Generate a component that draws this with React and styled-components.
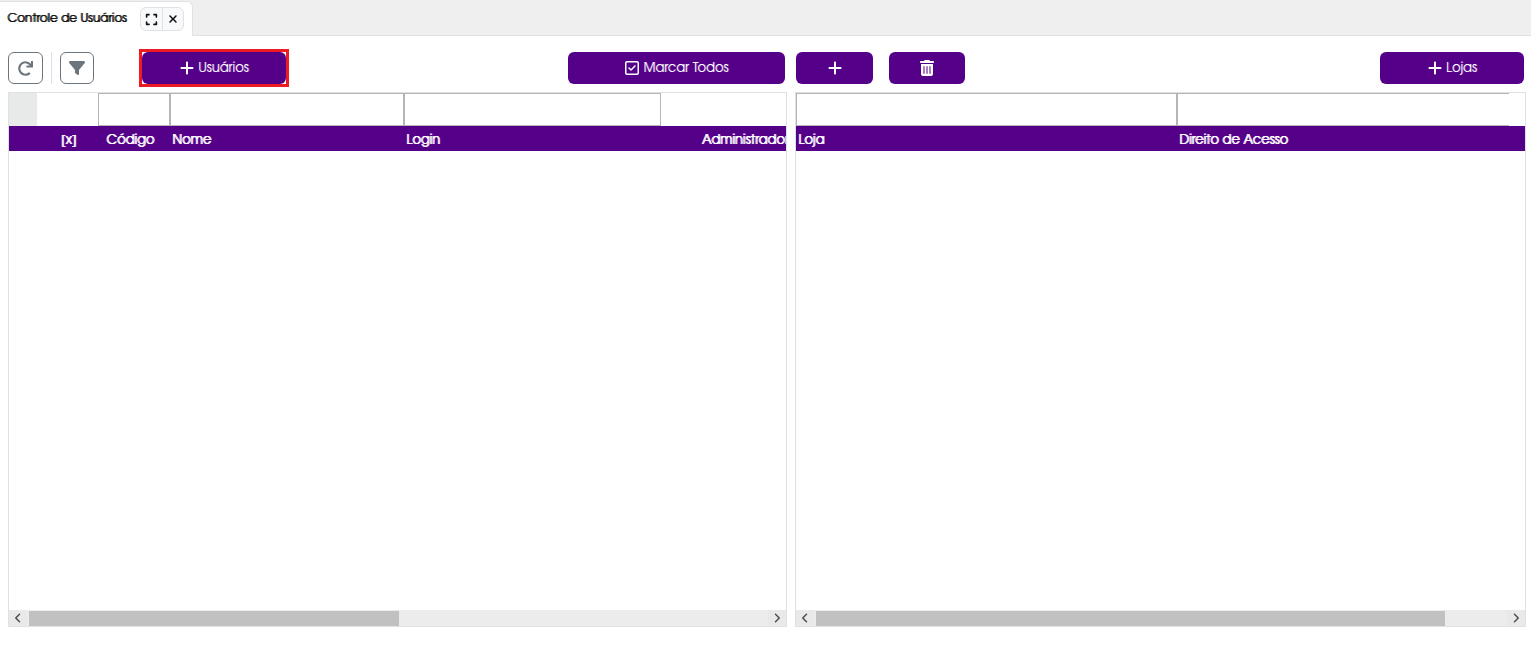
import React, { useRef } from "react";
import styled, { createGlobalStyle } from "styled-components";
import {
  FaExpand,
  FaFilter,
  FaPlus,
  FaRegSquareCheck,
  FaTrashCan,
  FaXmark,
  FaAngleLeft,
  FaAngleRight,
} from "react-icons/fa6";
import { FaRedo } from "react-icons/fa";

const PURPLE = "#550088";
const LINE = "#dee2e6";

const GlobalStyle = createGlobalStyle`
  * { box-sizing: border-box; }
  body {
    margin: 0;
    background: #fff;
    color: #111;
    font: 13px/20px "TeX Gyre Adventor", "Century Gothic", Inter, "Liberation Sans", sans-serif;
  }
  button, input { font: inherit; margin: 0; }
  button { cursor: pointer; }
`;

const Page = styled.div`
  display: flex;
  flex-direction: column;
  min-height: 100vh;
`;

const TabBar = styled.header`
  display: flex;
  height: 36px;
  padding-top: 1px;
  background: #efefef;
  border-bottom: 1px solid ${LINE};
`;

const Tab = styled.div`
  display: flex;
  align-items: center;
  gap: 13px;
  height: 35px;
  padding: 0 8px 0 7px;
  background: #fff;
  border: 1px solid ${LINE};
  border-width: 1px 1px 0 0;
  border-radius: 0 6px 0 0;
`;

const TabTitle = styled.h1`
  margin: 0;
  font-size: 12px;
  font-weight: 400;
  line-height: 20px;
  text-shadow: 1px 0 0 #111;
  white-space: nowrap;
`;

const TabActions = styled.div`
  display: flex;
  height: 24px;
  border: 1px solid ${LINE};
  border-radius: 6px;
  background: #f8f9fa;
  overflow: hidden;
`;

const TabButton = styled.button`
  display: flex;
  align-items: center;
  justify-content: center;
  width: 21px;
  padding: 0;
  border: 0;
  background: none;
  color: #111;

  & + & {
    border-left: 1px solid ${LINE};
  }
`;

const Workspace = styled.main`
  flex: 1;
  display: grid;
  grid-template-columns: minmax(0, 779fr) minmax(0, 731fr);
  grid-template-rows: auto 1fr;
  gap: 8px;
  padding: 16px 5px 21px 8px;
`;

const Toolbar = styled.div`
  display: flex;
  align-items: center;
  padding: 0 2px 0 ${(p) => (p.$inset ? "1px" : "0")};
`;

const Spacer = styled.span`
  flex: 1;
`;

const OutlineButton = styled.button`
  display: flex;
  align-items: center;
  justify-content: center;
  width: ${(p) => p.$width};
  height: 32px;
  padding: 0;
  border: 1px solid #6c757d;
  border-radius: 6px;
  background: #fff;
  color: #6c757d;
`;

const Divider = styled.span`
  width: 1px;
  height: 32px;
  margin: 0 8px;
  background: ${LINE};
`;

const SolidButton = styled.button`
  display: flex;
  align-items: center;
  justify-content: center;
  gap: 3px;
  width: ${(p) => p.$width};
  height: 32px;
  padding: 0;
  border: 0;
  border-radius: 6px;
  background: ${PURPLE};
  color: #fff;
  text-shadow: 1px 0 0 rgba(255, 255, 255, 0.25);
  white-space: nowrap;
`;

const Highlight = styled.div`
  margin: -3px 0 -3px 45px;
  border: 3px solid #ed1c24;
`;

const ActionGroup = styled.div`
  display: flex;
  gap: 16px;
`;

const Panel = styled.section`
  display: flex;
  flex-direction: column;
  min-width: 0;
  border: 1px solid ${LINE};
`;

const Viewport = styled.div`
  flex: 1;
  overflow: hidden;
`;

const Table = styled.table`
  table-layout: fixed;
  width: ${(p) => p.$width};
  border-collapse: collapse;
`;

const FilterCell = styled.td`
  height: 33px;
  padding: 0;
  background: ${(p) => (p.$marker ? "#e8eaea" : "#fff")};
`;

const FilterInput = styled.input`
  display: block;
  width: 100%;
  height: 33px;
  padding: 0 4px;
  border: 1px solid #b5b5b5;
  border-right-width: ${(p) => (p.$open ? "0" : "1px")};
  border-radius: 0;
  background: #fff;
  outline: none;
`;

const HeadCell = styled.th`
  height: 25px;
  padding: 3px ${(p) => (p.$sortable ? "10px" : "0")} 0 2px;
  background: ${PURPLE};
  color: #fff;
  font-size: 13px;
  font-weight: 400;
  line-height: 20px;
  text-align: ${(p) => p.$align || "left"};
  text-shadow: 1px 0 0 #fff;
  white-space: nowrap;
`;

const ScrollBar = styled.div`
  display: flex;
  height: 16px;
  background: #ececec;
`;

const ScrollButton = styled.button`
  display: flex;
  align-items: center;
  justify-content: center;
  width: 18px;
  padding: 0;
  border: 0;
  background: #e9e9e9;
  color: #505050;
`;

const Track = styled.div`
  flex: 1;
  padding: 1px 0 0 2px;
`;

const Thumb = styled.div`
  width: ${(p) => p.$size};
  height: 15px;
  background: #c1c1c1;
`;

const userColumns = [
  { id: "marker", width: 28, marker: true },
  { id: "check", width: 61, title: "[x]", align: "center" },
  { id: "code", width: 72, title: "Código", align: "center", filter: true, sortable: true },
  { id: "name", width: 234, title: "Nome", filter: true },
  { id: "login", width: 257, title: "Login", filter: true },
  { id: "admin", width: 166, title: "Administrador", align: "center" },
  { id: "rest" },
];

const storeColumns = [
  { id: "store", width: 381, title: "Loja", filter: true },
  { id: "access", width: 332, title: "Direito de Acesso", filter: true, open: true },
  { id: "rest" },
];

function DataPanel({ label, columns, width, thumb }) {
  const viewport = useRef(null);
  const scroll = (by) => viewport.current.scrollBy({ left: by });

  return (
    <Panel aria-label={label}>
      <Viewport ref={viewport}>
        <Table $width={width}>
          <colgroup>
            {columns.map((c) => (
              <col key={c.id} width={c.width} />
            ))}
          </colgroup>
          <thead>
            <tr>
              {columns.map((c) => (
                <FilterCell key={c.id} $marker={c.marker}>
                  {c.filter && <FilterInput $open={c.open} aria-label={`Filtrar ${c.title}`} />}
                </FilterCell>
              ))}
            </tr>
            <tr>
              {columns.map((c) => (
                <HeadCell key={c.id} scope="col" $align={c.align} $sortable={c.sortable}>
                  {c.title}
                </HeadCell>
              ))}
            </tr>
          </thead>
        </Table>
      </Viewport>
      <ScrollBar>
        <ScrollButton aria-label="Rolar para a esquerda" onClick={() => scroll(-40)}>
          <FaAngleLeft size={12} />
        </ScrollButton>
        <Track>
          <Thumb $size={thumb} />
        </Track>
        <ScrollButton aria-label="Rolar para a direita" onClick={() => scroll(40)}>
          <FaAngleRight size={12} />
        </ScrollButton>
      </ScrollBar>
    </Panel>
  );
}

export default function App() {
  return (
    <Page>
      <GlobalStyle />
      <TabBar>
        <Tab>
          <TabTitle>Controle de Usuários</TabTitle>
          <TabActions>
            <TabButton aria-label="Expandir">
              <FaExpand size={13} />
            </TabButton>
            <TabButton aria-label="Fechar">
              <FaXmark size={12} />
            </TabButton>
          </TabActions>
        </Tab>
      </TabBar>
      <Workspace>
        <Toolbar>
          <OutlineButton $width="35px" aria-label="Atualizar">
            <FaRedo size={15} />
          </OutlineButton>
          <Divider />
          <OutlineButton $width="34px" aria-label="Filtrar">
            <FaFilter size={16} />
          </OutlineButton>
          <Highlight>
            <SolidButton $width="144px">
              <FaPlus size={16} />
              Usuários
            </SolidButton>
          </Highlight>
          <Spacer />
          <SolidButton $width="217px">
            <FaRegSquareCheck size={16} />
            Marcar Todos
          </SolidButton>
        </Toolbar>
        <Toolbar $inset>
          <ActionGroup>
            <SolidButton $width="77px" aria-label="Adicionar">
              <FaPlus size={16} />
            </SolidButton>
            <SolidButton $width="76px" aria-label="Excluir">
              <FaTrashCan size={16} />
            </SolidButton>
          </ActionGroup>
          <Spacer />
          <SolidButton $width="144px">
            <FaPlus size={16} />
            Lojas
          </SolidButton>
        </Toolbar>
        <DataPanel label="Usuários" columns={userColumns} width="1552px" thumb="50%" />
        <DataPanel label="Lojas" columns={storeColumns} width="800px" thumb="91%" />
      </Workspace>
    </Page>
  );
}
